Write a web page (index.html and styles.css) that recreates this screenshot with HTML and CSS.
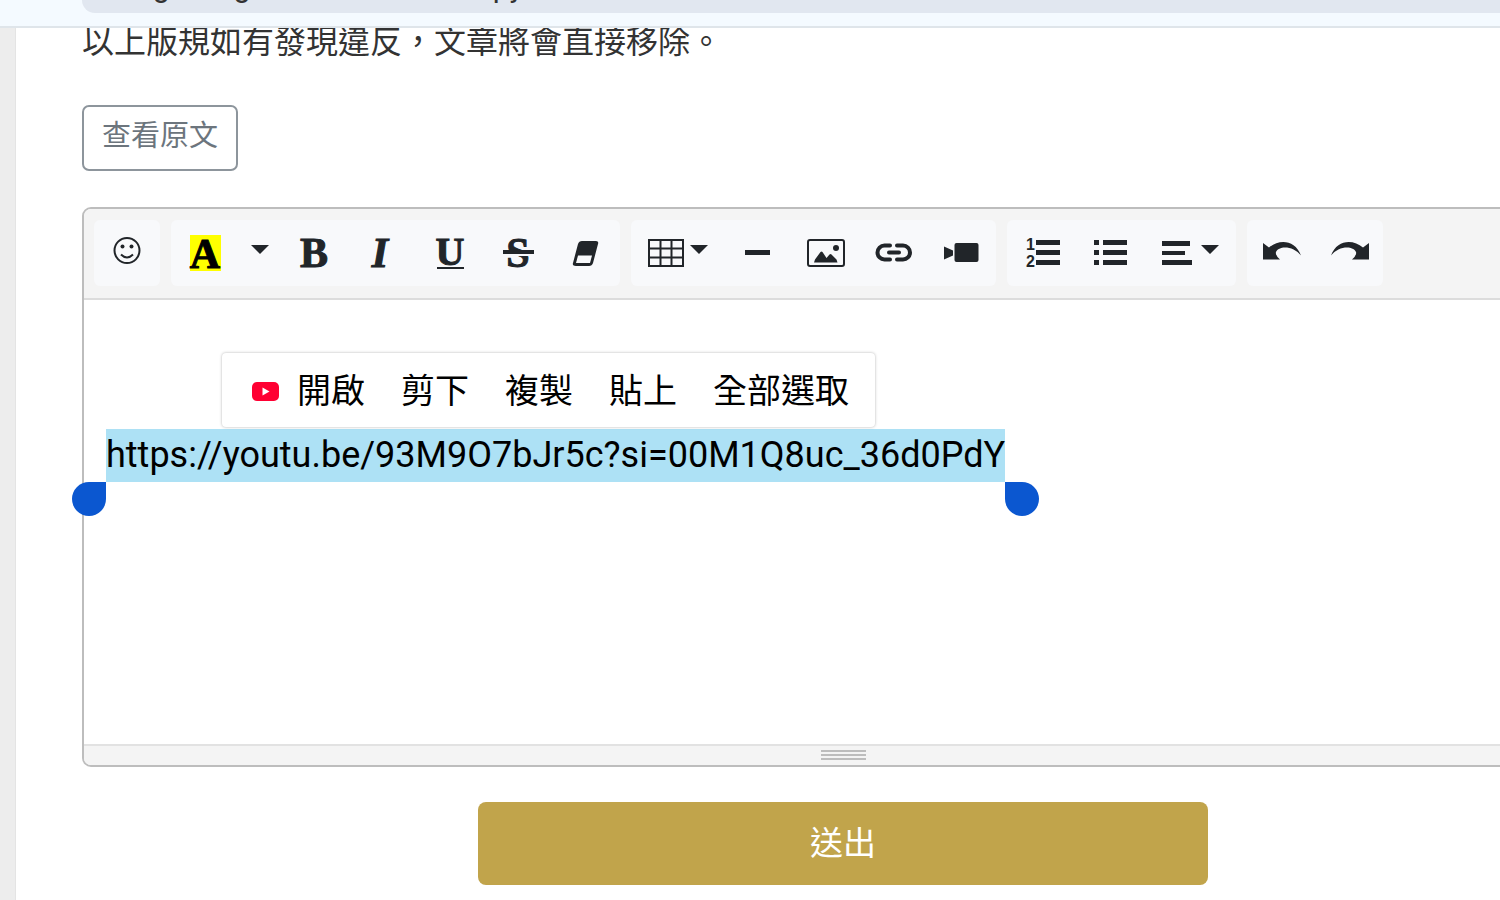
FILE: index.html
```
<!DOCTYPE html>
<html lang="zh-Hant">
<head>
    <meta charset="UTF-8">
    <meta name="viewport" content="width=device-width, initial-scale=1">
    <title>發表文章</title>
    <link rel="stylesheet" href="styles.css">
</head>
<body>

    <!-- Browser bar -->
    <header class="browser-bar">
        <div class="address"><span>g</span><span>g</span><span class="address-path">py</span></div>
    </header>

    <main class="page">
        <p class="rule">以上版規如有發現違反，文章將會直接移除。</p>
        <button type="button" class="btn-outline">查看原文</button>

        <!-- Editor -->
        <div class="editor">
            <div class="toolbar">
                <div class="group">
                    <button type="button" class="tool tool-emoji" aria-label="Emoji">
                        <svg width="44" height="44" fill="none" stroke="currentColor" stroke-width="2"><circle cx="22" cy="19.500" r="12.500"/><path d="M16 23.500q6 6 12 0"/><g fill="currentColor" stroke="none"><circle cx="17.500" cy="15.500" r="2"/><circle cx="26.500" cy="15.500" r="2"/></g></svg>
                    </button>
                </div>
                <div class="group">
                    <button type="button" class="tool" aria-label="Color">
                        <svg class="letter" width="44" height="44"><rect class="marker" x="7" y="4" width="31" height="36"/><text class="marked" x="22" y="37">A</text></svg>
                    </button>
                    <button type="button" class="tool tool-caret" aria-label="More colors">
                        <svg width="18" height="44"><path d="M0 14h18l-9 9z"/></svg>
                    </button>
                    <button type="button" class="tool" aria-label="Bold">
                        <svg class="letter" width="44" height="44"><text x="22" y="36">B</text></svg>
                    </button>
                    <button type="button" class="tool" aria-label="Italic">
                        <svg class="letter italic" width="44" height="44"><text x="20" y="36">I</text></svg>
                    </button>
                    <button type="button" class="tool" aria-label="Underline">
                        <svg class="letter underline" width="44" height="44"><text x="22" y="34">U</text><path d="M9 36h27v2H9z"/></svg>
                    </button>
                    <button type="button" class="tool" aria-label="Strikethrough">
                        <svg class="letter" width="44" height="44"><text x="22" y="36">S</text><path d="M7 19h31v4H7z"/><path class="gap" d="M10 23h24v2H10z"/></svg>
                    </button>
                    <button type="button" class="tool" aria-label="Remove format">
                        <svg width="44" height="44"><path d="M18 10h14q3 0 2 3l-5 19q-1 3-4 3H12q-4 0-3-3l5-19q1-3 4-3z"/><path class="gap" d="M14 24.500h14l-2 7.500H12z"/></svg>
                    </button>
                </div>
                <div class="group">
                    <button type="button" class="tool tool-wide" aria-label="Table">
                        <svg width="60" height="44"><path d="M1 9h34v26H1zM1 17.500h34M1 26.500h34M12.500 9v26M23.500 9v26" fill="none" stroke="currentColor" stroke-width="2"/><path d="M42 14h18l-9 9z"/></svg>
                    </button>
                    <button type="button" class="tool" aria-label="Line">
                        <svg width="44" height="44"><path d="M9 19h25v5H9z"/></svg>
                    </button>
                    <button type="button" class="tool" aria-label="Picture">
                        <svg width="44" height="44"><rect x="4" y="9" width="36" height="26" rx="2" fill="none" stroke="currentColor" stroke-width="2"/><path d="M10 31.500l1-3 5.500-7.500q1-1 2 0l4 6 3-3.500q1-1 2 0l5 5 1 3z"/><circle cx="32" cy="17" r="3"/></svg>
                    </button>
                    <button type="button" class="tool" aria-label="Link">
                        <svg width="44" height="44" fill="none" stroke="currentColor" stroke-width="4" stroke-linecap="round"><path d="M18 14.500h-5.500a7 7 0 0 0 0 14H18M25 14.500h6a7 7 0 0 1 0 14h-6M17 21.500h10"/></svg>
                    </button>
                    <button type="button" class="tool" aria-label="Video">
                        <svg width="44" height="44"><rect x="14.500" y="12" width="24" height="19" rx="2"/><path d="M4 15.500l9 4v5l-9 4z"/></svg>
                    </button>
                </div>
                <div class="group">
                    <button type="button" class="tool" aria-label="Ordered list">
                        <svg class="digits" width="44" height="44"><text x="7" y="19">1</text><text x="7" y="36">2</text><path d="M17 9h24v5H17zM17 19h24v5H17zM17 29h24v5H17z"/></svg>
                    </button>
                    <button type="button" class="tool" aria-label="Unordered list">
                        <svg width="44" height="44"><path d="M7 9h5v5H7zM7 19h5v5H7zM7 29h5v5H7zM16 9h24v5H16zM16 19h24v5H16zM16 29h24v5H16z"/></svg>
                    </button>
                    <button type="button" class="tool tool-wide" aria-label="Paragraph">
                        <svg width="58" height="44"><path d="M1 10h28v5H1zM1 20h23v4H1zM1 29h30v5H1zM40 14h18l-9 9z"/></svg>
                    </button>
                </div>
                <div class="group">
                    <button type="button" class="tool" aria-label="Undo">
                        <svg width="44" height="44"><path d="M4 12l6 4.500C20 8 36 8.500 42 24.500 35 15 20 14 17 21q-1 3 4 7.500H4z"/></svg>
                    </button>
                    <button type="button" class="tool" aria-label="Redo">
                        <svg width="44" height="44"><path d="M42 12l-6 4.500C26 8 10 8.500 4 24.500 11 15 26 14 29 21q1 3-4 7.500h17z"/></svg>
                    </button>
                </div>
            </div>

            <div class="editing-area">
                <div class="selection">
                    <div class="selected-text" contenteditable="true" role="textbox" aria-label="內容" spellcheck="false">https://youtu.be/93M9O7bJr5c?si=00M1Q8uc_36d0PdY</div>
                    <span class="handle handle-start"></span>
                    <span class="handle handle-end"></span>
                    <div class="context-menu">
                        <button type="button" class="menu-item">
                            <svg width="27" height="19"><rect width="27" height="19" rx="5" fill="#ff0033"/><path d="M10.500 5.500l7 4-7 4z" fill="#fff"/></svg>
                            開啟
                        </button>
                        <button type="button" class="menu-item">剪下</button>
                        <button type="button" class="menu-item">複製</button>
                        <button type="button" class="menu-item">貼上</button>
                        <button type="button" class="menu-item">全部選取</button>
                    </div>
                </div>
            </div>

            <div class="statusbar">
                <span class="grip"></span>
                <span class="grip"></span>
                <span class="grip"></span>
            </div>
        </div>

        <button type="submit" class="btn-submit">送出</button>
    </main>

</body>
</html>
```
FILE: styles.css
```
* {
    margin: 0;
    padding: 0;
    box-sizing: border-box;
}
body {
    font-family: Roboto, "Noto Sans CJK TC", sans-serif;
    background: #ededed;
    color: #333;
    min-height: 100vh;
    display: flex;
    flex-direction: column;
    overflow: hidden;
}
button {
    font-family: inherit;
    background: none;
    border: none;
    cursor: pointer;
}

/* Browser bar, stays above the scrolled page */
.browser-bar {
    position: relative;
    z-index: 1;
    background: #f4faff;
    border-bottom: 2px solid #dfe5ea;
    padding: 0 0 13px 82px;
}
.address {
    display: flex;
    align-items: flex-end;
    gap: 64px;
    height: 13px;
    padding: 0 0 11px 71px;
    background: #e1e7f0;
    border-bottom-left-radius: 32px;
    font-size: 30px;
    line-height: 30px;
    overflow: hidden;
}
.address-path {
    margin-left: 178px;
}

/* Page runs past the right edge of the window */
.page {
    flex: 1;
    margin-left: 15px;
    margin-right: -170px;
    padding: 0 66px 15px;
    background: #fff;
    border-left: 1px solid #e4e4e4;
}
.rule {
    font-size: 32px;
    line-height: 28px;
    margin-bottom: 49px;
}
.btn-outline {
    display: block;
    padding: 8px 18px 12px;
    border: 2px solid #8d959c;
    border-radius: 7px;
    color: #6c757d;
    font-size: 29px;
    line-height: 42px;
}

/* Editor */
.editor {
    margin-top: 36px;
    border: 2px solid #bdbdbd;
    border-radius: 9px;
}
.toolbar {
    display: flex;
    gap: 11px;
    padding: 11px 10px 12px;
    background: #f4f4f4;
    border-bottom: 2px solid #dcdcdc;
    border-radius: 7px 7px 0 0;
}
.group {
    display: flex;
    background: #f8f9fb;
    border-radius: 6px;
}
.tool {
    display: flex;
    align-items: center;
    justify-content: center;
    width: 68px;
    height: 66px;
    color: #212529;
}
.tool svg {
    fill: currentColor;
}
.tool svg[fill="none"] {
    fill: none;
}
.tool-emoji {
    width: 66px;
}
.tool-caret {
    width: 41px;
}
.tool-wide {
    width: 93px;
}
.letter {
    font-family: "Liberation Serif", serif;
    font-size: 42px;
    font-weight: bold;
    text-anchor: middle;
}
.letter text {
    stroke: currentColor;
    stroke-width: 1px;
}
.marker {
    fill: #ffff00;
}
.letter .marked {
    fill: #000;
    stroke: #000;
}
.italic {
    font-style: italic;
}
.underline {
    font-size: 40px;
}
.digits {
    font-family: "Liberation Sans", sans-serif;
    font-size: 16px;
    font-weight: bold;
}
.tool .gap {
    fill: #f8f9fb;
}
.editing-area {
    min-height: 444px;
    padding: 129px 22px 0;
}
.selection {
    position: relative;
    width: fit-content;
}
.selected-text {
    background: #ade1f5;
    color: #000;
    font-size: 36px;
    line-height: 53px;
    white-space: nowrap;
    outline: none;
}
.handle {
    position: absolute;
    top: 100%;
    width: 34px;
    height: 34px;
    background: #0b57d0;
}
.handle-start {
    right: 100%;
    border-radius: 50% 0 50% 50%;
}
.handle-end {
    left: 100%;
    border-radius: 0 50% 50% 50%;
}
.context-menu {
    position: absolute;
    left: 116px;
    bottom: calc(100% + 2px);
    display: flex;
    gap: 36px;
    padding: 13px 26px 11px 30px;
    background: #fff;
    border-radius: 4px;
    box-shadow: 0 0 3px rgba(0, 0, 0, 0.3);
}
.menu-item {
    display: flex;
    align-items: center;
    gap: 18px;
    color: #000;
    font-size: 34px;
    line-height: 50px;
    white-space: nowrap;
}
.statusbar {
    display: flex;
    flex-direction: column;
    align-items: center;
    gap: 2px;
    padding: 4px 0 5px;
    background: #f4f4f4;
    border-top: 2px solid #e2e2e2;
    border-radius: 0 0 7px 7px;
}
.grip {
    width: 45px;
    height: 2px;
    background: #bdbdbd;
}

.btn-submit {
    display: block;
    width: 48%;
    margin: 35px auto 0;
    padding: 17px;
    background: #c1a44b;
    border-radius: 8px;
    color: #fff;
    font-size: 33px;
    line-height: 49px;
}
```
